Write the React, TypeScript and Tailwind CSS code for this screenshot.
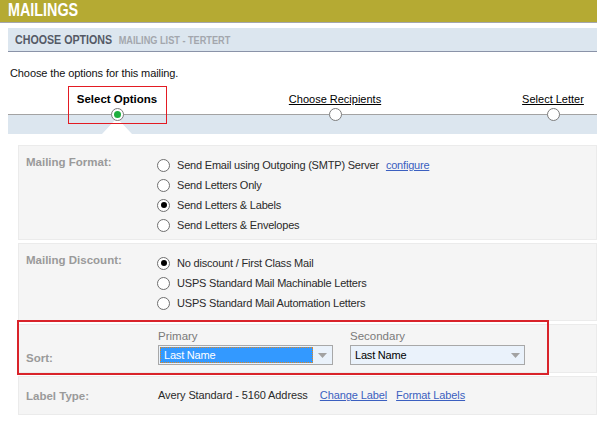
import React from "react";

// no narrow face installed: squeeze Liberation Sans bold to Arial Narrow's width
const narrow = "inline-block origin-left scale-x-[0.82] whitespace-nowrap font-bold";

function Radio({ checked, label, children }: { checked?: boolean; label: string; children?: React.ReactNode }) {
  return (
    <div className="flex h-[20px] items-center">
      <span className="flex h-[13px] w-[13px] items-center justify-center rounded-full border border-[#6f6f6f] bg-white">
        {checked && <span className="h-[6px] w-[6px] rounded-full bg-black" />}
      </span>
      <span className="ml-[7px] tracking-[-0.2px] text-[#2a2a2a]">{label}</span>
      {children}
    </div>
  );
}

function StepDot({ active }: { active?: boolean }) {
  return (
    <span className="flex h-[13px] w-[13px] items-center justify-center rounded-full border border-[#7c7c7c] bg-white">
      {active && <span className="h-[7px] w-[7px] rounded-full bg-[#1fae3f]" />}
    </span>
  );
}

function Arrow() {
  return (
    <svg width="9" height="5" viewBox="0 0 9 5" aria-hidden>
      <path d="M0 0h9L4.5 5z" fill="#a2a2a2" />
    </svg>
  );
}

function SortSelect({ label, focused }: { label: string; focused?: boolean }) {
  return (
    <div className="flex w-[175px] flex-col">
      <span className="h-[14px] text-[11.5px] leading-[14px] text-[#7a7a7a]">{label}</span>
      <div className="mt-[2px] flex h-[20px] items-center border border-[#a8a8a8] bg-[#eaf2fb]">
        {focused ? (
          <div className="ml-[1px] flex h-[16px] w-[153px] items-center border border-dotted border-[#e2861f] bg-[#3399ff] pl-[3px] tracking-[-0.2px] text-white">
            Last Name
          </div>
        ) : (
          <div className="flex h-[16px] w-[155px] items-center pl-[4px] tracking-[-0.2px] text-black">Last Name</div>
        )}
        <div className="flex flex-1 items-center justify-center">
          <Arrow />
        </div>
      </div>
    </div>
  );
}

const steps = [
  { label: "Select Options", active: true },
  { label: "Choose Recipients" },
  { label: "Select Letter" },
];

export default function App() {
  return (
    <div className="h-[421px] w-[600px] overflow-hidden bg-white font-['Liberation_Sans',Arial,sans-serif] text-[11px]">
      {/* top title bar */}
      <div className="flex h-[23px] w-[597px] items-center border-b border-[#a4a6ae] bg-[#b5aa33] pl-[8px]">
        <span className={`${narrow} text-[17.5px] leading-none text-white`}>MAILINGS</span>
      </div>

      <div className="ml-[8px] mt-[5px] flex h-[24px] w-[589px] items-center border-b border-[#8a93a8] bg-[#dce6ef] pl-[7px] pt-[1px]">
        <span className={narrow}>
          <span className="text-[13px] text-[#555a66]">CHOOSE OPTIONS</span>
          <span className="ml-[8px] text-[11.2px] text-[#a3a6ad]">MAILING LIST - TERTERT</span>
        </span>
      </div>

      <p className="mt-[14px] h-[14px] pl-[10px] leading-[14px] tracking-[-0.1px] text-[#111]">Choose the options for this mailing.</p>

      {/* step bar */}
      <div className="relative ml-[8px] mt-[6px] h-[48px] w-[589px] overflow-hidden">
        <div className="h-[28px]" />
        <div className="h-[1px] bg-[#a3a3a3]" />
        <div className="h-[19px] bg-[#dce6ef]" />
        <div className="absolute bottom-0 left-[94px] h-0 w-0 border-x-[15px] border-b-[16px] border-x-transparent border-b-white" />
        <div className="absolute inset-0 flex">
          {steps.map((s) => (
            <div key={s.label} className="flex w-[218px] shrink-0 justify-center">
              <div
                className={`flex h-[38px] w-[99px] flex-col items-center border ${
                  s.active ? "border-[#e31b23]" : "border-transparent"
                }`}
              >
                <span
                  className={`mt-[5px] h-[14px] whitespace-nowrap leading-[14px] text-black ${
                    s.active ? "text-[11.5px] font-bold" : "underline"
                  }`}
                >
                  {s.label}
                </span>
                <span className="mt-[2px]">
                  <StepDot active={s.active} />
                </span>
              </div>
            </div>
          ))}
        </div>
      </div>

      {/* options panel */}
      <div className="ml-[18px] mt-[11px] flex w-[579px] flex-col gap-[3px]">
        <div className="flex h-[95px] border border-[#ebebeb] bg-[#f5f5f5] pt-[9px]">
          <div className="w-[138px] pl-[7px] text-[11.5px] font-bold leading-[14px] text-[#9a9a9a]">Mailing Format:</div>
          <div className="flex flex-col">
            <Radio label="Send Email using Outgoing (SMTP) Server">
              <a className="ml-[7px] tracking-[-0.2px] text-[#3b5fc0] underline">configure</a>
            </Radio>
            <Radio label="Send Letters Only" />
            <Radio checked label="Send Letters & Labels" />
            <Radio label="Send Letters & Envelopes" />
          </div>
        </div>

        <div className="flex h-[78px] border border-[#ebebeb] bg-[#f5f5f5] pt-[9px]">
          <div className="w-[138px] pl-[7px] text-[11.5px] font-bold leading-[14px] text-[#9a9a9a]">Mailing Discount:</div>
          <div className="flex flex-col">
            <Radio checked label="No discount / First Class Mail" />
            <Radio label="USPS Standard Mail Machinable Letters" />
            <Radio label="USPS Standard Mail Automation Letters" />
          </div>
        </div>

        <div className="relative flex h-[49px] items-end border border-[#ebebeb] bg-[#f5f5f5] pb-[7px]">
          <div className="w-[139px] pl-[7px] text-[11.5px] font-bold leading-[14px] text-[#9a9a9a]">Sort:</div>
          <div className="flex gap-[17px]">
            <SortSelect label="Primary" focused />
            <SortSelect label="Secondary" />
          </div>
          <div className="pointer-events-none absolute left-[-2px] top-[-5px] h-[55px] w-[532px] border-2 border-[#d9232a]" />
        </div>

        <div className="flex h-[39px] items-center border border-[#ebebeb] bg-[#f5f5f5]">
          <div className="w-[139px] pl-[7px] text-[11.5px] font-bold leading-[14px] text-[#9a9a9a]">Label Type:</div>
          <span className="tracking-[-0.1px] text-[#2a2a2a]">Avery Standard - 5160 Address</span>
          <a className="ml-[12px] tracking-[-0.1px] text-[#3b5fc0] underline">Change Label</a>
          <a className="ml-[9px] tracking-[-0.1px] text-[#3b5fc0] underline">Format Labels</a>
        </div>
      </div>
    </div>
  );
}
